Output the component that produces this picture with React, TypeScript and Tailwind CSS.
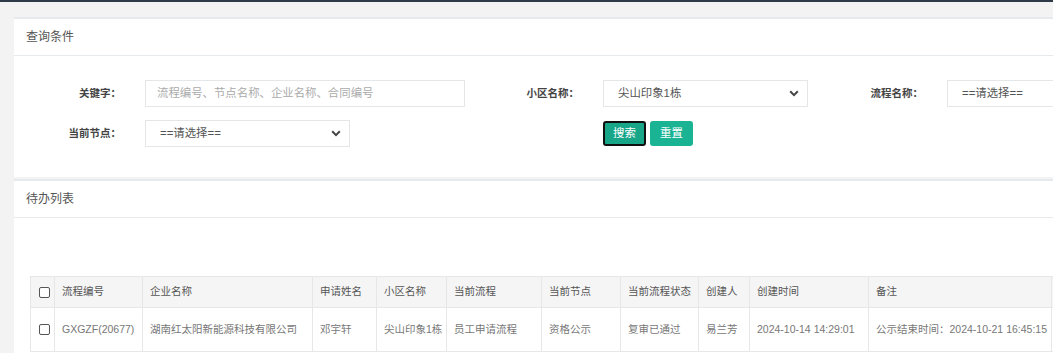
import React from 'react';

const rows = [
  {
    code: 'GXGZF(20677)',
    company: '湖南红太阳新能源科技有限公司',
    applicant: '邓宇轩',
    estate: '尖山印象1栋',
    flow: '员工申请流程',
    node: '资格公示',
    status: '复审已通过',
    creator: '易兰芳',
    created: '2024-10-14 14:29:01',
    remark: '公示结束时间：2024-10-21 16:45:15',
  },
];

// last column runs past the window edge, so it is left empty
const columns = [
  { key: 'code', label: '流程编号', width: 88 },
  { key: 'company', label: '企业名称', width: 170 },
  { key: 'applicant', label: '申请姓名', width: 64 },
  { key: 'estate', label: '小区名称', width: 70 },
  { key: 'flow', label: '当前流程', width: 95 },
  { key: 'node', label: '当前节点', width: 79 },
  { key: 'status', label: '当前流程状态', width: 78 },
  { key: 'creator', label: '创建人', width: 51 },
  { key: 'created', label: '创建时间', width: 119 },
  { key: 'remark', label: '备注', width: 183 },
  { key: 'op', label: '', width: 120 },
] as const;

const font = 'font-["Liberation_Sans","Noto_Sans_CJK_SC",sans-serif]';

function Chevron() {
  return (
    <svg width="10" height="7" viewBox="0 0 10 7" className="shrink-0">
      <path d="M1.2 1.3L5 5.1l3.8-3.8" fill="none" stroke="#444" strokeWidth="2" />
    </svg>
  );
}

function Label({ children }: { children: React.ReactNode }) {
  return (
    <div className="flex items-center justify-end pr-[24px] text-[10.5px] font-bold text-[#444]">
      {children}
    </div>
  );
}

function Select({ value, width }: { value: string; width: string }) {
  return (
    <div
      className={`${width} h-[27px] flex items-center justify-between border border-[#e5e6e7] bg-white pl-[14px] pr-[8px] text-[11.4px] text-[#555]`}
    >
      <span>{value}</span>
      <Chevron />
    </div>
  );
}

function Checkbox() {
  return (
    <span className="block w-[11px] h-[11px] border border-[#555] rounded-[2px] bg-white" />
  );
}

export default function App() {
  return (
    <div className={`w-[1053px] h-[353px] overflow-hidden bg-[#f3f3f4] ${font}`}>
      <div className="h-[2px] bg-[#2f3a48]" />
      <div className="w-[1320px] pl-[14px] pt-[15px]">
        <section className="bg-white border-t-2 border-[#e7eaec]">
          <div className="h-[37px] flex items-center px-[12px] border-b border-[#e7eaec] text-[12px] text-[#555]">
            查询条件
          </div>
          <div className="pl-[12px] pt-[24px] pb-[30px]">
            <div className="grid grid-cols-[119px_320px_138px_205px_139px_205px] gap-y-[13px]">
              <Label>关键字：</Label>
              <div className="h-[27px] flex items-center border border-[#e5e6e7] px-[11px] text-[11.4px] text-[#aaa]">
                流程编号、节点名称、企业名称、合同编号
              </div>
              <Label>小区名称：</Label>
              <Select value="尖山印象1栋" width="w-[205px]" />
              <Label>流程名称：</Label>
              <Select value="==请选择==" width="w-[205px]" />

              <Label>当前节点：</Label>
              <Select value="==请选择==" width="w-[205px]" />
              <div />
              <div className="flex items-start gap-[4px] pt-[1px]">
                <button className="w-[43px] h-[25px] rounded-[3px] border-2 border-[#111] bg-[#18a689] text-[11.4px] text-white">
                  搜索
                </button>
                <button className="w-[43px] h-[25px] rounded-[3px] bg-[#1ab394] text-[11.4px] text-white">
                  重置
                </button>
              </div>
            </div>
          </div>
        </section>

        <section className="mt-[2px] bg-white border-t-2 border-[#e7eaec]">
          <div className="h-[37px] flex items-center px-[12px] border-b border-[#e7eaec] text-[12px] text-[#555]">
            待办列表
          </div>
          <div className="pl-[16px] pt-[58px] pb-[20px]">
            <table className="w-[1141px] table-fixed border-collapse text-[10.5px]">
              <colgroup>
                <col style={{ width: 24 }} />
                {columns.map((c) => (
                  <col key={c.key} style={{ width: c.width }} />
                ))}
              </colgroup>
              <thead>
                <tr className="h-[31px] bg-[#f5f5f6] text-[#555]">
                  <th className="border border-[#e7e7e7] pl-[8px]">
                    <Checkbox />
                  </th>
                  {columns.map((c) => (
                    <th key={c.key} className="border border-[#e7e7e7] px-[7px] text-left font-normal whitespace-nowrap overflow-hidden">
                      {c.label}
                    </th>
                  ))}
                </tr>
              </thead>
              <tbody>
                {rows.map((r) => (
                  <tr key={r.code} className="h-[44px] text-[#777]">
                    <td className="border border-[#e7e7e7] pl-[8px]">
                      <Checkbox />
                    </td>
                    {columns.map((c) => (
                      <td key={c.key} className="border border-[#e7e7e7] px-[7px] whitespace-nowrap overflow-hidden">
                        {c.key === 'op' ? '' : r[c.key]}
                      </td>
                    ))}
                  </tr>
                ))}
              </tbody>
            </table>
          </div>
        </section>
      </div>
    </div>
  );
}
